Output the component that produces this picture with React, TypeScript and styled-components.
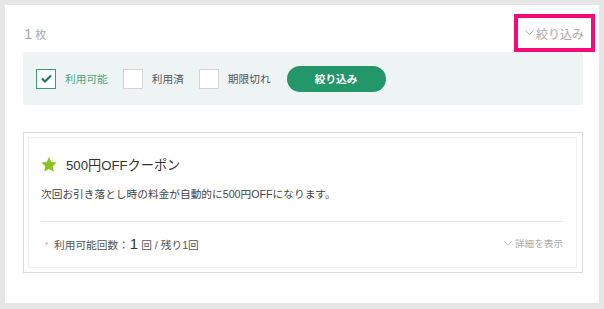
import React from 'react';
import styled, { createGlobalStyle } from 'styled-components';

const GlobalStyle = createGlobalStyle`
  html, body {
    margin: 0;
    padding: 0;
    background: #e6e6e6;
    font-family: "Liberation Sans", "Noto Sans CJK JP", sans-serif;
  }
`;

const Page = styled.div`
  padding: 5px 5px 6px 5px;
`;

const Panel = styled.div`
  background: #fff;
  height: 298px;
  box-sizing: border-box;
  padding: 9px 16px 0 18px;
`;

const Header = styled.div`
  position: relative;
  display: flex;
  align-items: center;
  justify-content: space-between;
  height: 38px;
`;

const Count = styled.div`
  color: #a8a8a8;
  font-size: 11px;
  padding-left: 1px;
  display: flex;
  align-items: baseline;
  gap: 3px;

  b {
    font-weight: normal;
    font-size: 15px;
  }
`;

const Toggle = styled.div`
  display: flex;
  align-items: center;
  gap: 2px;
  color: #a8a8a8;
  font-size: 12px;
  margin-right: -1px;
`;

const Highlight = styled.div`
  position: absolute;
  right: -12px;
  top: 0;
  width: 81px;
  height: 38px;
  box-sizing: border-box;
  border: 4px solid #f50a78;
`;

const Filter = styled.div`
  display: flex;
  align-items: center;
  height: 53px;
  background: #eef4f4;
  border-radius: 3px;
  padding-left: 13px;
`;

const Option = styled.label<{ $checked?: boolean }>`
  display: flex;
  align-items: center;
  gap: 9px;
  margin-right: 15px;
  font-size: 10.7px;
  color: ${(p) => (p.$checked ? '#4fa67c' : '#555')};
`;

const Box = styled.span<{ $checked?: boolean }>`
  width: 20px;
  height: 20px;
  box-sizing: border-box;
  background: #fff;
  border: 1px solid ${(p) => (p.$checked ? '#3a9d72' : '#d4d4d4')};
  display: flex;
  align-items: center;
  justify-content: center;
`;

const Apply = styled.button`
  width: 99px;
  height: 26px;
  margin-left: 1px;
  border: none;
  border-radius: 13px;
  background: #23976a;
  color: #fff;
  font-family: inherit;
  font-size: 10.7px;
  font-weight: bold;
  padding: 0;
`;

const Card = styled.div`
  margin-top: 27px;
  border: 1px solid #dcdcdc;
  padding: 4px 5px 4px 4px;
`;

const CardInner = styled.div`
  border: 1px solid #f1f1f1;
  padding: 18px 13px 0 12px;
  height: 131px;
  box-sizing: border-box;
`;

const Title = styled.div`
  display: flex;
  align-items: center;
  gap: 9px;
  font-size: 13.2px;
  color: #333;
  height: 16px;
`;

const Desc = styled.p`
  margin: 14px 0 0;
  font-size: 10.7px;
  color: #444;
  line-height: 16px;
`;

const Divider = styled.hr`
  margin: 19px 0 0;
  border: none;
  border-top: 1px solid #e4e4e4;
`;

const Footer = styled.div`
  display: flex;
  align-items: center;
  justify-content: space-between;
  height: 42px;
`;

const Usage = styled.div`
  display: flex;
  align-items: baseline;
  font-size: 10.7px;
  color: #555;

  b {
    font-weight: normal;
    font-size: 15px;
    color: #333;
    margin: 0 3px 0 1px;
  }
`;

const Dot = styled.span`
  display: inline-block;
  width: 3px;
  height: 3px;
  border-radius: 50%;
  background: #e3c9d0;
  margin: 0 6px 0 4px;
  align-self: center;
`;

const Detail = styled.div`
  display: flex;
  align-items: center;
  gap: 3px;
  font-size: 9.6px;
  color: #aaa;
  margin-right: 0;
`;

const Chevron = ({ size = 9 }: { size?: number }) => (
  <svg width={size} height={size * 0.6} viewBox="0 0 10 6">
    <polyline points="0.5,0.5 5,5 9.5,0.5" fill="none" stroke="#aaa" strokeWidth="1" />
  </svg>
);

const Check = () => (
  <svg width="11" height="9" viewBox="0 0 11 9">
    <polyline points="1,4.5 4,7.5 10,1.5" fill="none" stroke="#1e7a52" strokeWidth="2.2" />
  </svg>
);

const Star = () => (
  <svg width="16" height="15" viewBox="0 0 24 23">
    <polygon
      points="12,0 15.5,7.8 24,8.6 17.6,14.3 19.4,22.6 12,18.3 4.6,22.6 6.4,14.3 0,8.6 8.5,7.8"
      fill="#8cc320"
    />
  </svg>
);

const options = [
  { label: '利用可能', checked: true },
  { label: '利用済', checked: false },
  { label: '期限切れ', checked: false },
];

function App() {
  return (
    <Page>
      <GlobalStyle />
      <Panel>
        <Header>
          <Count>
            <b>1</b>枚
          </Count>
          <Toggle>
            <Chevron />
            絞り込み
          </Toggle>
          <Highlight />
        </Header>

        <Filter>
          {options.map((o) => (
            <Option key={o.label} $checked={o.checked}>
              <Box $checked={o.checked}>{o.checked && <Check />}</Box>
              {o.label}
            </Option>
          ))}
          <Apply>絞り込み</Apply>
        </Filter>

        <Card>
          <CardInner>
            <Title>
              <Star />
              500円OFFクーポン
            </Title>
            <Desc>次回お引き落とし時の料金が自動的に500円OFFになります。</Desc>
            <Divider />
            <Footer>
              <Usage>
                <Dot />
                利用可能回数：<b>1</b>回 / 残り1回
              </Usage>
              <Detail>
                <Chevron size={8} />
                詳細を表示
              </Detail>
            </Footer>
          </CardInner>
        </Card>
      </Panel>
    </Page>
  );
}

export default App;
